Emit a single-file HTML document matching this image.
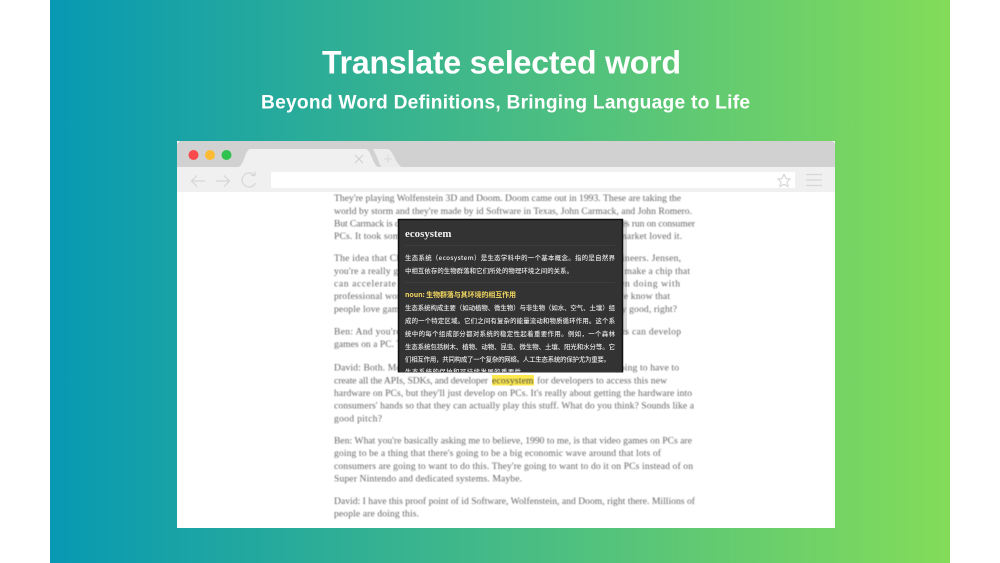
<!DOCTYPE html>
<html><head><meta charset="utf-8">
<style>
html,body{margin:0;padding:0;background:#fff;width:1000px;height:563px;overflow:hidden}
svg{position:absolute;left:0;top:0;display:block}
.t{font-family:"Liberation Serif",serif;font-size:9.6px;fill:#656565}
.h{font-family:"Liberation Sans",sans-serif;font-weight:bold;fill:#fff}
.c{font-family:"Noto Sans CJK SC",sans-serif;font-size:6.4px;fill:#e8e8e8;font-weight:500}
</style></head><body>
<svg width="1000" height="563" viewBox="0 0 1000 563" xmlns="http://www.w3.org/2000/svg">
<defs>
<linearGradient id="g" x1="50" y1="0" x2="950" y2="0" gradientUnits="userSpaceOnUse">
<stop offset="0" stop-color="#0799b3"/><stop offset="1" stop-color="#83dc59"/>
</linearGradient>
<filter id="b1" x="-2%" y="-20%" width="104%" height="140%"><feGaussianBlur stdDeviation="0.45"/></filter>
<filter id="b2" x="-5%" y="-5%" width="110%" height="110%"><feGaussianBlur stdDeviation="0.35"/></filter>
<clipPath id="pop"><rect x="399" y="220" width="223" height="152"/></clipPath>
</defs>
<rect x="50" y="0" width="900" height="563" fill="url(#g)"/>
<g filter="url(#b2)">
<text class="h" x="322" y="73.5" font-size="32" textLength="359" lengthAdjust="spacing">Translate selected word</text>
<text class="h" x="261" y="108.5" font-size="19.2" textLength="489" lengthAdjust="spacing">Beyond Word Definitions, Bringing Language to Life</text>
</g>
<rect x="177" y="141" width="658" height="387" fill="#fff"/>
<path d="M177 167V145a4 4 0 0 1 4-4H831a4 4 0 0 1 4 4V167Z" fill="#d1d1d1"/>
<rect x="177" y="167" width="658" height="25" fill="#f0f0f0"/>
<rect x="271" y="172" width="524" height="16" fill="#fff"/>
<circle cx="193.500" cy="155" r="5" fill="#fb4a4c"/>
<circle cx="210" cy="155" r="5" fill="#fdbb33"/>
<circle cx="226.500" cy="155" r="5" fill="#2fc24f"/>
<path d="M238 167C244 166 245 150 250 149H366C371 150 373 165 378 167Z" fill="#f0f0f0"/>
<path d="M373 149H388C393 150 396 165 402 167H381C378 160 376 154 373 149Z" fill="#ececec"/>
<g filter="url(#b2)">
<path d="M355 155L363 163M363 155L355 163" stroke="#d0d0d0" stroke-width="1.100" fill="none"/>
<path d="M388 155V163M384 159H392" stroke="#dadada" stroke-width="1" fill="none"/>
<g fill="none" stroke="#d6d6d6" stroke-width="1.200">
<path d="M205 181H192M197 175.500L191.500 181L197 186.500"/>
<path d="M216 181H229M224 175.500L229.500 181L224 186.500"/>
<path d="M254.500 175.500A7 7 0 1 0 255.500 183"/><path d="M251 175.500H255V171.500"/>
<path d="M784 174.500L786 178.500L790 179L787 182L788 186.500L784 184.300L780 186.500L781 182L778 179L782 178.500Z"/>
<path d="M806 174.500H822M806 180H822M806 185.500H822"/>
</g>
</g>
<rect x="492" y="375" width="42" height="10.500" fill="#fde94f"/>
<rect x="622" y="220" width="5" height="115" fill="#d9d9d9"/>
<g filter="url(#b1)">
<text class="t" x="334" y="201" textLength="347">They're playing Wolfenstein 3D and Doom. Doom came out in 1993. These are taking the</text>
<text class="t" x="334" y="214" textLength="358">world by storm and they're made by id Software in Texas, John Carmack, and John Romero.</text>
<text class="t" x="334" y="226.500" textLength="361">But Carmack is doing something that nobody else can do, making these games run on consumer</text>
<text class="t" x="334" y="239" textLength="348">PCs. It took some time but a lot of people have since found out and the market loved it.</text>
<text class="t" x="334" y="261" textLength="347">The idea that Chris and Curtis have is that these are great software engineers. Jensen,</text>
<text class="t" x="334" y="274" textLength="356">you're a really good chip designer and these guys want you to help them make a chip that</text>
<text class="t" x="334" y="286.500" textLength="346">can accelerate this stuff and that is exactly what they have all been doing with</text>
<text class="t" x="334" y="299" textLength="336">professional workstations and now we all think we have found out and we know that</text>
<text class="t" x="334" y="312" textLength="343">people love games that run on a PC and we all think they are really pretty good, right?</text>
<text class="t" x="334" y="334.500" textLength="347">Ben: And you're saying that if you make this chip then all of these guys can develop</text>
<text class="t" x="334" y="347" textLength="80">games on a PC. That</text>
<text class="t" x="334" y="370.500" textLength="345">David: Both. Most of all these guys are going to make it so we are not going to have to</text>
<text class="t" x="334" y="383.500" textLength="154">create all the APIs, SDKs, and developer</text>
<text class="t" x="492" y="383.500" textLength="41.500" style="fill:#444">ecosystem</text>
<text class="t" x="537" y="383.500" textLength="130">for developers to access this new</text>
<text class="t" x="334" y="396" textLength="358">hardware on PCs, but they'll just develop on PCs. It's really about getting the hardware into</text>
<text class="t" x="334" y="408.500" textLength="360">consumers' hands so that they can actually play this stuff. What do you think? Sounds like a</text>
<text class="t" x="334" y="421.500" textLength="48">good pitch?</text>
<text class="t" x="334" y="443.500" textLength="358">Ben: What you're basically asking me to believe, 1990 to me, is that video games on PCs are</text>
<text class="t" x="334" y="456" textLength="327">going to be a thing that there's going to be a big economic wave around that lots of</text>
<text class="t" x="334" y="469" textLength="359">consumers are going to want to do this. They're going to want to do it on PCs instead of on</text>
<text class="t" x="334" y="481.500" textLength="188">Super Nintendo and dedicated systems. Maybe.</text>
<text class="t" x="334" y="504" textLength="361">David: I have this proof point of id Software, Wolfenstein, and Doom, right there. Millions of</text>
<text class="t" x="334" y="516.500" textLength="85">people are doing this.</text>
</g>
<rect x="398" y="219" width="225" height="153.500" fill="#333"/>
<path d="M398.500 372.500V219.500H622.500V372.500" fill="none" stroke="#111" stroke-width="1.500"/>
<g clip-path="url(#pop)" filter="url(#b2)">
<text x="405" y="237" font-family="Liberation Serif,serif" font-weight="bold" font-size="10.500" fill="#f2f2f2" textLength="46.500" lengthAdjust="spacingAndGlyphs">ecosystem</text>
<rect x="405" y="245" width="210" height="1" fill="#3d3d3d"/>
<text class="c" x="405" y="260" textLength="210">生态系统（ecosystem）是生态学科中的一个基本概念。指的是自然界</text>
<text class="c" x="405" y="273" textLength="168">中相互依存的生物群落和它们所处的物理环境之间的关系。</text>
<rect x="405" y="282" width="210" height="1" fill="#3d3d3d"/>
<text class="c" x="405" y="297" textLength="111" style="fill:#f0d65e;font-size:7px;font-weight:700">noun: 生物群落与其环境的相互作用</text>
<text class="c" x="405" y="310" textLength="210">生态系统构成主要（如动植物、微生物）与非生物（如水、空气、土壤）组</text>
<text class="c" x="405" y="323" textLength="210">成的一个特定区域。它们之间有复杂的能量流动和物质循环作用。这个系</text>
<text class="c" x="405" y="336" textLength="210">统中的每个组成部分都对系统的稳定性起着重要作用。例如，一个森林</text>
<text class="c" x="405" y="349" textLength="210">生态系统包括树木、植物、动物、昆虫、微生物、土壤、阳光和水分等。它</text>
<text class="c" x="405" y="361.500" textLength="205">们相互作用，共同构成了一个复杂的网络。人工生态系统的保护尤为重要。</text>
<text class="c" x="405" y="374" textLength="123">生态系统的保护和可持续发展的重要性。</text>
</g>
</svg>
</body></html>
